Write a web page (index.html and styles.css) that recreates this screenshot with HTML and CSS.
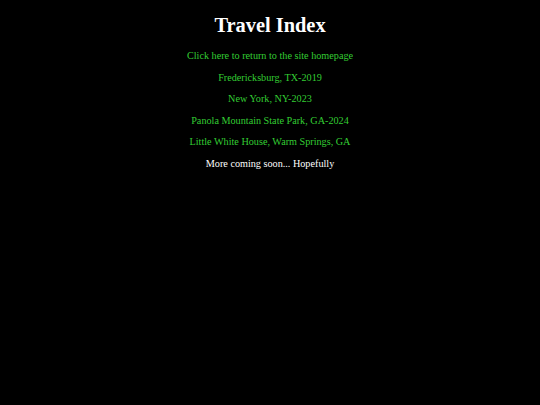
FILE: index.html
```html
<!DOCTYPE html>
<html>
<head>
<meta charset="utf-8">
<title>Travel Index</title>
<link rel="stylesheet" href="styles.css">
</head>
<body>
<h1 class="title">Travel Index</h1>
<p class="item"><a class="link" href="#">Click here to return to the site homepage</a></p>
<p class="item"><a class="link" href="#">Fredericksburg, TX-2019</a></p>
<p class="item"><a class="link" href="#">New York, NY-2023</a></p>
<p class="item"><a class="link" href="#">Panola Mountain State Park, GA-2024</a></p>
<p class="item"><a class="link" href="#">Little White House, Warm Springs, GA</a></p>
<p class="item note">More coming soon... Hopefully</p>
</body>
</html>
```
FILE: styles.css
```css
html, body {
  background: #000;
}
body {
  margin: 0;
  color: #fff;
  font-family: "Liberation Serif", "Times New Roman", serif;
  font-size: 10.2px;
  text-align: center;
}
.title {
  font-size: 20.4px;
  font-weight: bold;
  margin: 14px 0 13px;
  line-height: 23px;
}
.item {
  margin: 10px 0;
  line-height: 11.6px;
}
.link {
  color: #33cc33;
  text-decoration: none;
}
.note {
  color: #fff;
}
```
